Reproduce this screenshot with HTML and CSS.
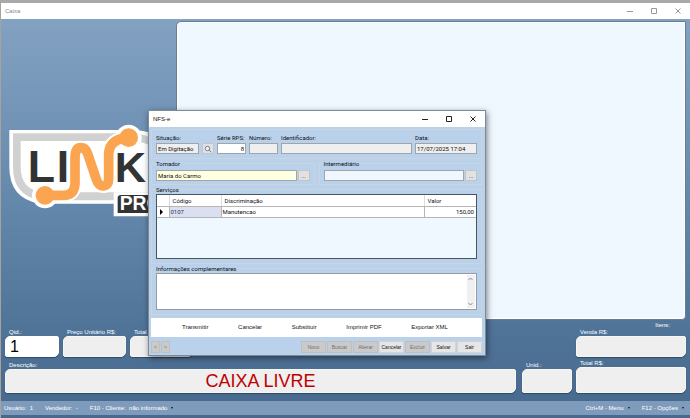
FILE: index.html
```
<!DOCTYPE html>
<html lang="pt-BR">

<head>
    <meta charset="UTF-8">
    <meta name="viewport" content="width=device-width, initial-scale=1.0">
    <title>Caixa</title>
    <link rel="stylesheet" href="styles.css">
</head>

<body>
    <div class="screen">
        <header class="titlebar titlebar-inactive">
            <h1>Caixa</h1>
            <button type="button" aria-label="Minimizar"><svg viewBox="0 0 8 8"><path d="M1 4.5h6" /></svg></button>
            <button type="button" aria-label="Maximizar"><svg viewBox="0 0 8 8"><path d="M1.5 1.5h5v5h-5z" /></svg></button>
            <button type="button" aria-label="Fechar"><svg viewBox="0 0 8 8"><path d="M1.5 1.5l5 5M6.5 1.5l-5 5" /></svg></button>
        </header>

        <main class="stage">
            <aside class="brand">
                <svg class="logo" viewBox="28 38 480 285" role="img" aria-label="Link Pro">
                    <path d="M29 59H400Q508 62 508 150V280H120Q29 265 29 170Z" fill="#fff" />
                    <path d="M40 69H400Q492 75 492 150V270H120Q40 255 40 170Z" fill="#d1d1d1" />
                    <path d="M63 92H400Q470 96 470 150V246H130Q63 238 63 170Z" fill="#fff" />
                    <circle cx="136" cy="255" r="39" fill="#fff" />
                    <circle cx="387" cy="82" r="39" fill="#fff" />
                    <path d="M136 255H190Q224 255 226 220V145Q226 112 243 112Q258 112 264 130L290 207Q297 227 310 227Q327 227 327 205V130Q330 85 387 82" fill="none" stroke="#fff" stroke-width="42" />
                    <path d="M342 246H508V318H342Z" fill="#fff" />
                    <path d="M354 262Q354 254 364 254H508V308H354Z" fill="#333" />
                    <g class="logo-text" fill="#333">
                        <text x="84" y="216" font-size="134">L</text>
                        <text x="171" y="216" font-size="134">I</text>
                        <text x="345" y="214" font-size="130">K</text>
                        <text x="360" y="300" font-size="58" fill="#fff">PRO</text>
                    </g>
                    <path d="M136 255H190Q224 255 226 220V145Q226 112 243 112Q258 112 264 130L290 207Q297 227 310 227Q327 227 327 205V130Q330 85 387 82" fill="none" stroke="#fca550" stroke-width="29" />
                    <circle cx="136" cy="255" r="28" fill="#fca550" />
                    <circle cx="387" cy="82" r="28" fill="#fca550" />
                </svg>
            </aside>
            <section class="items" aria-label="Itens da venda"></section>
        </main>

        <section class="sale">
            <div class="sale-row">
                <div class="sale-field qty">
                    <label for="qtd">Qtd.:</label>
                    <input type="text" id="qtd" value="1">
                </div>
                <div class="sale-field price">
                    <label for="preco">Preço Unitário R$:</label>
                    <input type="text" id="preco" readonly>
                </div>
                <div class="sale-field price">
                    <label for="total-item">Total R$:</label>
                    <input type="text" id="total-item" readonly>
                </div>
                <div class="sale-field total">
                    <span class="items-count">Itens:</span>
                    <label for="venda">Venda R$:</label>
                    <input type="text" id="venda" readonly>
                </div>
            </div>
            <div class="sale-row">
                <div class="sale-field description">
                    <label for="descricao">Descrição:</label>
                    <input type="text" id="descricao" value="CAIXA LIVRE" readonly>
                </div>
                <div class="sale-field unit">
                    <label for="unid">Unid.:</label>
                    <input type="text" id="unid" readonly>
                </div>
                <div class="sale-field total">
                    <label for="total">Total R$:</label>
                    <input type="text" id="total" readonly>
                </div>
            </div>
        </section>

        <footer class="statusbar">
            <span>Usuário:&nbsp; 1</span>
            <span>Vendedor:&nbsp; -</span>
            <button type="button" class="drop">F10 - Cliente:&nbsp; não informado</button>
            <button type="button" class="drop push">Ctrl+M - Menu</button>
            <button type="button" class="drop">F12 - Opções</button>
        </footer>

        <form class="dialog" role="dialog" aria-labelledby="dialog-title">
            <div class="titlebar">
                <h2 id="dialog-title">NFS-e</h2>
                <button type="button" aria-label="Minimizar"><svg viewBox="0 0 8 8"><path d="M1 4.5h6" /></svg></button>
                <button type="button" aria-label="Maximizar"><svg viewBox="0 0 8 8"><path d="M1.5 1.5h5v5h-5z" /></svg></button>
                <button type="button" aria-label="Fechar"><svg viewBox="0 0 8 8"><path d="M1.5 1.5l5 5M6.5 1.5l-5 5" /></svg></button>
            </div>

            <div class="dialog-body">
                <div class="group header-fields">
                    <div class="field situation">
                        <label for="situacao">Situação:</label>
                        <input type="text" id="situacao" value="Em Digitação" readonly>
                    </div>
                    <button type="button" class="lookup" aria-label="Pesquisar">
                        <svg viewBox="0 0 8 8"><circle cx="3.5" cy="3.5" r="2.2" /><path d="M5.2 5.2l2 2" /></svg>
                    </button>
                    <div class="field short">
                        <label for="serie">Série RPS:</label>
                        <input type="text" id="serie" class="number" value="8">
                    </div>
                    <div class="field short">
                        <label for="numero">Número:</label>
                        <input type="text" id="numero" readonly>
                    </div>
                    <div class="field grow">
                        <label for="identificador">Identificador:</label>
                        <input type="text" id="identificador" readonly>
                    </div>
                    <div class="field date">
                        <label for="data">Data:</label>
                        <input type="text" id="data" value="17/07/2025 17:04" readonly>
                    </div>
                </div>

                <div class="parties">
                    <fieldset class="group">
                        <legend>Tomador</legend>
                        <div class="picker">
                            <input type="text" class="active" value="Maria do Carmo" aria-label="Tomador">
                            <button type="button" class="lookup" aria-label="Buscar tomador">...</button>
                        </div>
                    </fieldset>
                    <fieldset class="group">
                        <legend>Intermediário</legend>
                        <div class="picker">
                            <input type="text" class="empty" aria-label="Intermediário">
                            <button type="button" class="lookup" aria-label="Buscar intermediário">...</button>
                        </div>
                    </fieldset>
                </div>

                <fieldset class="group services">
                    <legend>Serviços</legend>
                    <div class="grid">
                        <table>
                            <thead>
                                <tr>
                                    <th class="col-mark"></th>
                                    <th class="col-code">Código</th>
                                    <th>Discriminação</th>
                                    <th class="col-value">Valor</th>
                                </tr>
                            </thead>
                            <tbody>
                                <tr>
                                    <td><svg class="row-mark" viewBox="0 0 3 6"><path d="M0 0l3 3-3 3z" /></svg></td>
                                    <td class="selected">0107</td>
                                    <td>Manutencao</td>
                                    <td class="number">150,00</td>
                                </tr>
                            </tbody>
                        </table>
                    </div>
                </fieldset>

                <fieldset class="group notes">
                    <legend>Informações complementares</legend>
                    <div class="notes-box">
                        <textarea aria-label="Informações complementares"></textarea>
                        <div class="scroll">
                            <svg viewBox="0 0 5 4"><path d="M.5 3l2-2 2 2" /></svg>
                            <svg viewBox="0 0 5 4"><path d="M.5 1l2 2 2-2" /></svg>
                        </div>
                    </div>
                </fieldset>

                <div class="actions">
                    <button type="button">Transmitir</button>
                    <button type="button">Cancelar</button>
                    <button type="button">Substituir</button>
                    <button type="button">Imprimir PDF</button>
                    <button type="button">Exportar XML</button>
                </div>

                <div class="commands">
                    <button type="button" class="nav" disabled>&lt;</button>
                    <button type="button" class="nav" disabled>&gt;</button>
                    <button type="button" class="push" disabled>Novo</button>
                    <button type="button" disabled>Buscar</button>
                    <button type="button" disabled>Alterar</button>
                    <button type="button">Cancelar</button>
                    <button type="button" disabled>Excluir</button>
                    <button type="button">Salvar</button>
                    <button type="button">Sair</button>
                </div>
            </div>
        </form>
    </div>
</body>

</html>
```
FILE: styles.css
```
* {
    box-sizing: border-box;
}

body {
    margin: 0;
    font-family: "Liberation Sans", Arial, sans-serif;
    font-size: 6px;
    line-height: 7px;
    color: #111;
}

button,
input,
textarea {
    margin: 0;
    padding: 0;
    border: none;
    border-radius: 0;
    background: none;
    font: inherit;
    color: inherit;
    outline: none;
}

svg {
    display: block;
}

.push {
    margin-left: auto;
}

.number {
    text-align: right;
}

/* main window */
.screen {
    position: relative;
    display: flex;
    flex-direction: column;
    min-height: 100vh;
    padding-bottom: 3px;
    border-top: 3px solid #a9a9a9;
    border-left: 1px solid #a8a29e;
    background: linear-gradient(#86a4c4, #668aae 45%, #4f7297 80%, #48698e);
}

.titlebar {
    display: flex;
    align-items: center;
    height: 16px;
    padding-left: 4px;
    background: #fff;
}

.titlebar h1,
.titlebar h2 {
    flex: 1;
    margin: 0;
    font-size: 6px;
    font-weight: normal;
}

.titlebar button {
    width: 24px;
    height: 16px;
}

.titlebar svg {
    width: 8px;
    height: 8px;
    margin: 0 auto;
    fill: none;
    stroke: #222;
}

.titlebar-inactive {
    color: #888;
}

.titlebar-inactive svg {
    stroke: #999;
}

.stage {
    flex: 1;
    display: flex;
    padding: 2px 4px 0 0;
}

.brand {
    width: 175px;
    padding: 102px 0 0 8px;
}

.logo {
    width: 160px;
    height: 95px;
}

.logo-text {
    font-family: "Liberation Sans", Arial, sans-serif;
    font-weight: bold;
}

.items {
    flex: 1;
    border: 1px solid #6b7b8c;
    border-radius: 5px 0 4px 0;
    background: #eff7ff;
    box-shadow: inset 0 0 0 1px #fff;
}

/* sale fields */
.sale {
    padding: 2px 4px 8px;
    color: #fff;
}

.sale-row {
    display: flex;
    align-items: flex-end;
    gap: 4px;
}

.sale-row + .sale-row {
    margin-top: 3px;
}

.sale-field {
    display: flex;
    flex-direction: column;
}

.sale-field label {
    padding-left: 4px;
}

.sale-field input {
    width: 100%;
    height: 21px;
    padding: 0 4px;
    border: 1px solid #fff;
    border-radius: 5px 2px 5px 2px;
    background: #fff;
    box-shadow: 0 1px 1px #2e4a68;
    font-size: 16px;
    color: #000;
}

.sale-field input:read-only {
    border-color: #f8f6f0;
    background: #efefef;
}

.qty {
    width: 54px;
}

.price {
    width: 63px;
}

.total {
    width: 110px;
    margin-left: auto;
}

.items-count {
    padding-right: 16px;
    text-align: right;
}

.sale-field.description {
    flex: 1;
    margin-right: 2px;
}

.unit {
    width: 50px;
}

.sale-row + .sale-row input {
    height: 24px;
}

.sale-row + .sale-row .total input {
    height: 26px;
}

.sale-row .description input {
    font-size: 18px;
    color: #c00000;
    text-align: center;
}

.unit + .total {
    margin-left: 0;
}

.statusbar {
    display: flex;
    align-items: center;
    gap: 12px;
    height: 14px;
    padding: 0 6px 0 3px;
    background: #7f9bbb;
    color: #fff;
}

.drop::after {
    content: "";
    display: inline-block;
    margin: 0 0 1px 4px;
    border: 1px solid transparent;
    border-top: 2px solid #111;
    border-bottom: none;
}

/* NFS-e window */
.dialog {
    position: absolute;
    top: 107px;
    left: 147px;
    width: 338px;
    border: 1px solid #7c8b99;
    background: #b9d1ea;
    box-shadow: 1px 2px 6px rgba(0, 0, 0, 0.5);
}

.dialog-body {
    padding: 2px 3px 2px 2px;
}

.group {
    min-width: 0;
    margin: 0;
    border: 1px solid #cbd5de;
    font-family: Roboto, "Liberation Sans", sans-serif;
}

legend {
    padding: 0;
}

fieldset.group {
    padding: 3px 4px;
}

.group input {
    width: 100%;
    height: 11px;
    padding: 0 1px;
    border: 1px solid #a0a5aa;
    background: #fff;
}

.group input:read-only {
    background: #efefef;
}

.group input.active {
    background: #ffffe1;
}

.group input.empty {
    background: #eff7ff;
}

.header-fields {
    display: flex;
    align-items: flex-end;
    gap: 3px;
    padding: 4px;
}

.field {
    display: flex;
    flex-direction: column;
    gap: 2px;
    white-space: nowrap;
}

.situation {
    width: 43px;
}

.short {
    width: 29px;
}

.grow {
    flex: 1;
}

.date {
    width: 62px;
}

.lookup {
    width: 12px;
    height: 11px;
    border: 1px solid #c4c4c4;
    background: #e1e1e1;
    line-height: 6px;
    text-align: center;
}

.lookup svg {
    width: 8px;
    height: 8px;
    margin: 0 auto;
    fill: #eef6ff;
    stroke: #6b7f92;
}

.parties {
    display: grid;
    grid-template-columns: 1fr 1fr;
    gap: 4px;
    margin-top: 1px;
}

.picker {
    display: flex;
    gap: 1px;
}

.picker input {
    flex: 1;
    min-width: 0;
}

fieldset.services {
    margin-top: 1px;
    padding: 1px 4px 4px;
}

.grid {
    height: 65px;
    border: 1px solid #4a545e;
    background: #eff7ff;
}

.grid table {
    width: 100%;
    table-layout: fixed;
    border-collapse: collapse;
    background: #fff;
}

.grid th,
.grid td {
    height: 11px;
    padding: 0 2px 0 1px;
    border-right: 1px solid #b5b5b5;
    border-bottom: 1px solid #b5b5b5;
}

.grid th {
    padding-left: 3px;
    border-right-color: #ddd;
    font-weight: normal;
    text-align: left;
}

.grid th:last-child,
.grid td:last-child {
    border-right: none;
}

.grid .selected {
    background: #dcdff0;
    color: #1b3a66;
}

.col-mark {
    width: 12px;
}

.col-code,
.col-value {
    width: 52px;
}

.row-mark {
    width: 3px;
    height: 6px;
    margin-left: 2px;
}

fieldset.notes {
    margin-top: 1px;
    padding: 1px 4px 4px;
}

.notes-box {
    display: flex;
    height: 37px;
    border: 1px solid #939ba3;
    background: #fff;
}

.notes-box textarea {
    flex: 1;
    resize: none;
}

.scroll {
    display: flex;
    flex-direction: column;
    justify-content: space-between;
    width: 8px;
    margin: 1px;
    padding: 2px 1px;
    background: #f0f0f0;
}

.scroll svg {
    width: 5px;
    height: 4px;
    fill: none;
    stroke: #8a8a8a;
}

.actions {
    display: flex;
    justify-content: space-between;
    height: 19px;
    margin-top: 3px;
    padding: 0 34px 0 31px;
    background: #fff;
}

.commands {
    display: flex;
    gap: 1px;
    padding-top: 4px;
}

.commands button {
    width: 25px;
    height: 12px;
    border: 1px solid #d3d3d3;
    background: #e6e6e6;
    font-size: 5px;
    text-align: center;
}

.commands button:disabled {
    border-color: #bfbfbf;
    background: #cacaca;
    color: #707070;
}

.commands .nav {
    width: 9px;
}

.commands .push {
    margin-left: auto;
}
```
